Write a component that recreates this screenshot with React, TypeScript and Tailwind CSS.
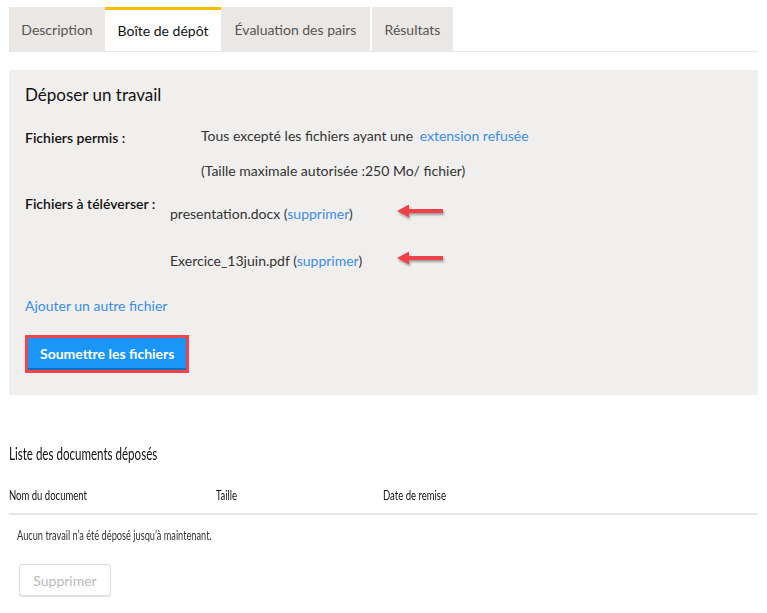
const FONT = "font-['Lato','Noto_Sans',sans-serif]"
const SQUEEZE = 'inline-block origin-left [transform:scaleX(0.68)]'

const tabs = [
  { label: 'Description', active: false, w: 'w-[96px]' },
  { label: 'Boîte de dépôt', active: true, w: 'w-[116px]' },
  { label: 'Évaluation des pairs', active: false, w: 'w-[149px]' },
  { label: 'Résultats', active: false, w: 'w-[81px]' },
]

const files = ['presentation.docx', 'Exercice_13juin.pdf']

function Arrow() {
  return (
    <svg width="52" height="22" viewBox="0 0 52 22" className="ml-[30px] shrink-0">
      <defs>
        <filter id="sh" x="-20%" y="-50%" width="140%" height="200%">
          <feDropShadow dx="1" dy="2" stdDeviation="1.3" floodColor="#000" floodOpacity="0.35" />
        </filter>
      </defs>
      <g filter="url(#sh)">
        <path d="M2 9 L14 2.5 L14 7 L48 7 L48 11 L14 11 L14 15.5 Z" fill="#f04148" />
      </g>
    </svg>
  )
}

export default function App() {
  return (
    <div className={`${FONT} w-[767px] h-[613px] bg-white text-[14px] text-[#333]`}>
      <div className="px-[9px] pt-[7px]">
        <div className="flex gap-[2px] border-b border-[#e8e5e2]">
          {tabs.map((t) => (
            <div
              key={t.label}
              className={`${t.w} h-[44px] flex items-center justify-center ${
                t.active
                  ? 'bg-white text-[#111] border-t-[3px] border-[#f5bf00]'
                  : 'bg-[#ebe7e4] text-[#555]'
              } ${t.label === 'Boîte de dépôt' ? '-mx-[2px]' : ''}`}
            >
              {t.label}
            </div>
          ))}
        </div>
      </div>

      <div className="mx-[9px] mt-[18px] bg-[#f1efed] px-[16px] pt-[15px] pb-[22px] h-[325px]">
        <h2 className="text-[17px] text-[#111] leading-[20px]">Déposer un travail</h2>

        <div className="mt-[22px] flex">
          <div className="w-[176px] font-semibold text-[#111]">Fichiers permis :</div>
          <div>
            <div className="leading-[18px]">
              Tous excepté les fichiers ayant une{' '}
              <span className="ml-[3px] text-[#3a8ee6]">extension refusée</span>
            </div>
            <div className="mt-[17px] leading-[18px]">(Taille maximale autorisée :250 Mo/ fichier)</div>
          </div>
        </div>

        <div className="mt-[15px] flex">
          <div className="w-[145px] font-semibold text-[#111] leading-[18px]">Fichiers à téléverser :</div>
          <div className="pt-[9px] flex flex-col gap-[29px]">
            {files.map((f) => (
              <div key={f} className="flex items-center h-[18px]">
                <span className="w-[195px]">
                  {f} (<span className="text-[#3a8ee6]">supprimer</span>)
                </span>
                <Arrow />
              </div>
            ))}
          </div>
        </div>

        <div className="mt-[28px] text-[#3a8ee6] leading-[18px]">Ajouter un autre fichier</div>

        <div className="mt-[20px] inline-block border-[3px] border-[#f0434a]">
          <button className="h-[32px] px-[12px] bg-[#1a96f9] border-b-2 border-[#0d6fc2] text-white font-bold">
            Soumettre les fichiers
          </button>
        </div>
      </div>

      <div className="px-[9px]">
        <h2 className="mt-[49px] text-[17px] text-[#111] leading-[20px]">
          <span className={SQUEEZE}>Liste des documents déposés</span>
        </h2>
        <div className="mt-[12px] flex h-[39px] items-center border-b-2 border-[#e8e5e2] text-[#111]">
          <div className="w-[207px]">
            <span className={SQUEEZE}>Nom du document</span>
          </div>
          <div className="w-[167px]">
            <span className={SQUEEZE}>Taille</span>
          </div>
          <div>
            <span className={SQUEEZE}>Date de remise</span>
          </div>
        </div>
        <div className="mt-[11px] ml-[8px] leading-[18px]">
          <span className="inline-block origin-left [transform:scaleX(0.66)]">
            Aucun travail n’a été déposé jusqu’à maintenant.
          </span>
        </div>
        <button className="block mt-[20px] ml-[10px] h-[32px] w-[92px] rounded-[3px] border border-[#ddd] shadow-[0_1px_1px_rgba(0,0,0,0.12)] text-[#bbb] bg-white">
          Supprimer
        </button>
      </div>
    </div>
  )
}
